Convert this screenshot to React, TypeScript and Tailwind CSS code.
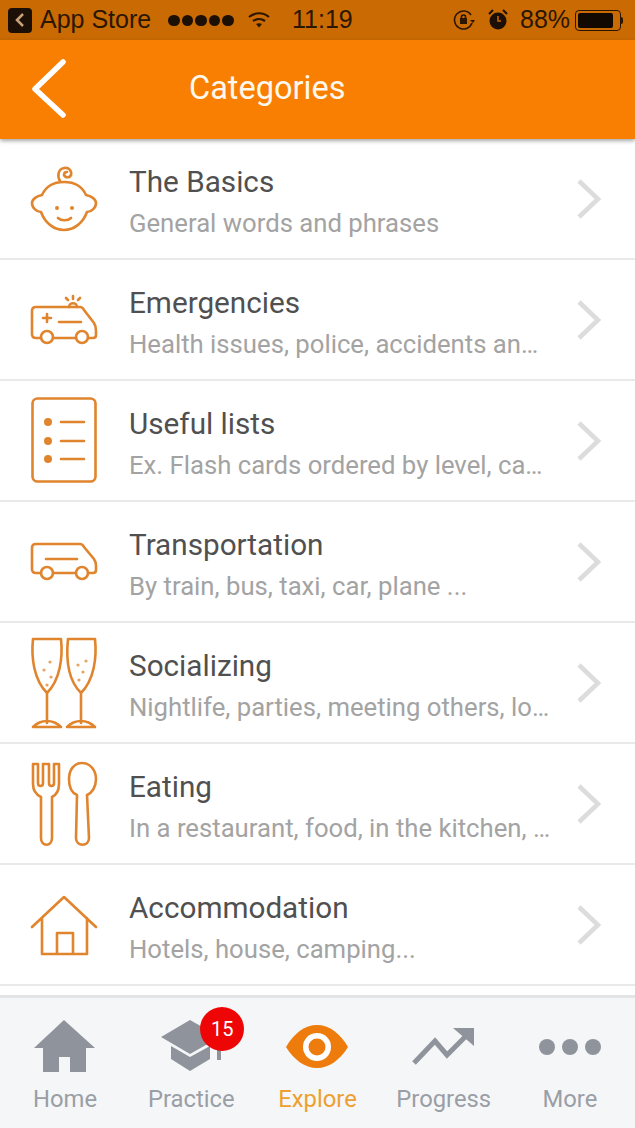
import type { ReactNode } from "react";

const iconStroke = "#e0852e";

function Icon({ y, children }: { y: number; children: ReactNode }) {
  return (
    <svg
      className="shrink-0"
      width={70}
      height={96}
      viewBox={`30 ${y} 70 96`}
      fill="none"
      stroke={iconStroke}
      strokeWidth={2.6}
      strokeLinecap="round"
      strokeLinejoin="round"
    >
      {children}
    </svg>
  );
}

const categories: { title: string; sub: string; icon: ReactNode }[] = [
  {
    title: "The Basics",
    sub: "General words and phrases",
    icon: (
      <Icon y={151}>
        <path d="M42 195C46 186 54 182 64 182C74 182 82 186 86 195C91 196 96 199 96 203C96 208 91 212 87 212C83 223 74 230 64 230C54 230 45 223 41 212C37 212 32 208 32 203C32 199 37 196 42 195Z" />
        <path d="M60 181C57 176 58 169 64 168C69 167 72 171 71 175C70 178 65 178 64 175C64 173 65 172 67 172" />
        <circle cx={57} cy={208} r={2} fill={iconStroke} stroke="none" />
        <circle cx={72} cy={208} r={2} fill={iconStroke} stroke="none" />
        <path d="M58 218C61 221 68 221 71 218" />
      </Icon>
    ),
  },
  {
    title: "Emergencies",
    sub: "Health issues, police, accidents an…",
    icon: (
      <Icon y={272}>
        <path d="M41 338H36C33 338 32 336 32 334V311C32 308 34 307 36 307H80C82 307 83 308 84 310L94 323C96 326 96 328 96 331V335C96 337 95 338 93 338H88M76 338H53" />
        <circle cx={47} cy={337} r={6} />
        <circle cx={82} cy={337} r={6} />
        <path d="M43 318H51M47 314V322M59 322H81" />
        <path d="M69 307C69 302 77 302 77 307M73 296V299M66 298L68 300M80 298L78 300" />
      </Icon>
    ),
  },
  {
    title: "Useful lists",
    sub: "Ex. Flash cards ordered by level, ca…",
    icon: (
      <Icon y={393}>
        <rect x={32.5} y={398.5} width={63} height={83} rx={5} />
        <circle cx={48} cy={422} r={4} fill={iconStroke} stroke="none" />
        <circle cx={48} cy={441} r={4} fill={iconStroke} stroke="none" />
        <circle cx={48} cy={459} r={4} fill={iconStroke} stroke="none" />
        <path d="M61 422H84M61 441H84M61 459H84" />
      </Icon>
    ),
  },
  {
    title: "Transportation",
    sub: "By train, bus, taxi, car, plane ...",
    icon: (
      <Icon y={514}>
        <path d="M41 573H36C33 573 32 571 32 569V548C32 545 34 544 36 544H80C82 544 83 545 84 547L94 559C96 562 96 564 96 566V570C96 572 95 573 93 573H88M76 573H53" />
        <circle cx={47} cy={573} r={6} />
        <circle cx={82} cy={573} r={6} />
        <path d="M46 559H77" />
      </Icon>
    ),
  },
  {
    title: "Socializing",
    sub: "Nightlife, parties, meeting others, lo…",
    icon: (
      <Icon y={635}>
        <path d="M33 639H61C63 658 60 680 47 693C34 680 31 658 33 639ZM47 693V723" />
        <path d="M68 639H95C97 658 94 680 81 693C68 680 66 658 68 639ZM81 693V723" />
        <path d="M33 727C37 723 42 721 47 721C52 721 57 723 61 727ZM67 727C71 723 76 721 81 721C86 721 91 723 95 727Z" />
        <g fill={iconStroke} stroke="none" opacity={0.75}>
          <circle cx={50} cy={662} r={1.6} />
          <circle cx={44} cy={670} r={1.6} />
          <circle cx={51} cy={677} r={1.6} />
          <circle cx={47} cy={685} r={1.6} />
          <circle cx={86} cy={661} r={1.6} />
          <circle cx={78} cy={665} r={1.6} />
          <circle cx={83} cy={672} r={1.6} />
          <circle cx={79} cy={680} r={1.6} />
        </g>
      </Icon>
    ),
  },
  {
    title: "Eating",
    sub: "In a restaurant, food, in the kitchen, …",
    icon: (
      <Icon y={756}>
        <path d="M33 764H38V783C38 787 43 787 43 783V764H49V783C49 787 54 787 54 783V764H59V784C59 791 56 795 52 797V838C52 847 41 847 41 838V797C37 795 33 791 33 784Z" />
        <path d="M82 763C90 763 96 770 96 779C96 787 92 793 87 795L89 838C89 847 76 847 76 838L77 795C72 793 69 787 69 779C69 770 74 763 82 763Z" />
      </Icon>
    ),
  },
  {
    title: "Accommodation",
    sub: "Hotels, house, camping...",
    icon: (
      <Icon y={877}>
        <path d="M32 927L64 897L96 927M42 918V954H87V918M57 954V933H73V954" />
      </Icon>
    ),
  },
];

function HomeIcon() {
  return (
    <svg width={62} height={54} viewBox="35 1021 62 54" fill="#8f949c">
      <path d="M65 1021L96 1049H87V1073H71V1058H60V1073H44V1049H35Z" />
    </svg>
  );
}

function PracticeIcon() {
  return (
    <svg width={62} height={54} viewBox="160 1021 62 54" fill="#8f949c">
      <path d="M161 1038L190 1021L220 1038L190 1055Z" />
      <path d="M171 1047L190 1058L210 1047V1060L190 1072L171 1060Z" />
      <rect x={217} y={1040} width={4} height={21} />
    </svg>
  );
}

function ExploreIcon() {
  return (
    <svg width={62} height={44} viewBox="286 1020 62 44">
      <path d="M286 1042C294 1028 305 1020 317 1020C329 1020 340 1028 348 1042C340 1055 329 1063 317 1063C305 1063 294 1055 286 1042Z" fill="#ee7c0c" />
      <circle cx={317} cy={1042} r={14} fill="#fff" />
      <circle cx={317} cy={1042} r={8.500} fill="#ee7c0c" />
    </svg>
  );
}

function ProgressIcon() {
  return (
    <svg width={64} height={40} viewBox="412 1020 64 40" fill="none">
      <path d="M414 1056L435 1034L447 1048L466 1029" stroke="#8f949c" strokeWidth={5} />
      <path d="M453 1021H474V1039Z" fill="#8f949c" />
    </svg>
  );
}

function MoreIcon() {
  return (
    <div className="flex h-[54px] items-center gap-[7px]">
      <div className="h-4 w-4 rounded-full bg-[#8f949c]" />
      <div className="h-4 w-4 rounded-full bg-[#8f949c]" />
      <div className="h-4 w-4 rounded-full bg-[#8f949c]" />
    </div>
  );
}

const tabs: { label: string; icon: ReactNode; active?: boolean; badge?: string }[] = [
  { label: "Home", icon: <HomeIcon /> },
  { label: "Practice", icon: <PracticeIcon />, badge: "15" },
  { label: "Explore", icon: <ExploreIcon />, active: true },
  { label: "Progress", icon: <ProgressIcon /> },
  { label: "More", icon: <MoreIcon /> },
];

function StatusBar() {
  return (
    <div className="flex h-10 shrink-0 items-center bg-[#c96a02] pl-2 pr-[9px] font-['Liberation_Sans',sans-serif] text-[25px] text-[#2b1602]">
      <div className="flex h-[25px] w-6 items-center justify-center rounded-[4px] bg-[#1c1006]">
        <svg width={12} height={16} viewBox="0 0 12 16" fill="none" stroke="#c9a27a" strokeWidth={2.5}>
          <path d="M9 2L3 8L9 14" />
        </svg>
      </div>
      <span className="ml-2 w-[128px] whitespace-nowrap text-[25px]">App Store</span>
      <div className="flex w-[80px] gap-[2px]">
        {[0, 1, 2, 3, 4].map((i) => (
          <div key={i} className="h-[11px] w-[11.5px] rounded-full bg-[#1c1006]" />
        ))}
      </div>
      <svg width={22} height={16} viewBox="0 0 22 16" fill="none" stroke="#2b1602" strokeWidth={2.2}>
        <path d="M1 5C7 0 15 0 21 5M5 9C8.500 6.500 13.500 6.500 17 9" />
        <path d="M8 12L11 15.500L14 12C12.500 11 9.500 11 8 12Z" fill="#2b1602" stroke="none" />
      </svg>
      <span className="ml-[22px] w-[161px] whitespace-nowrap">11:19</span>
      <svg width={22} height={22} viewBox="0 0 22 22" fill="none" stroke="#2b1602" strokeWidth={1.6}>
        <path d="M19 14A9 9 0 1 1 18 6" />
        <path d="M17 11L20 14L22 11" fill="#2b1602" stroke="none" />
        <rect x={7} y={9} width={7} height={6} fill="#2b1602" stroke="none" />
        <path d="M8.500 9V7.500C8.500 5.500 12.500 5.500 12.500 7.500V9" />
      </svg>
      <svg className="ml-[13px]" width={20} height={22} viewBox="0 0 20 22" fill="#1c1006">
        <circle cx={10} cy={12} r={8.500} />
        <path d="M10 7V12H13" fill="none" stroke="#c96a02" strokeWidth={1.5} />
        <path d="M1 5L5 1M19 5L15 1" stroke="#1c1006" strokeWidth={2} />
      </svg>
      <span className="ml-3 w-[55px] whitespace-nowrap">88%</span>
      <div className="flex items-center">
        <div className="h-[21px] w-[46px] rounded-[4px] border border-[#2b1602] p-[2px]">
          <div className="h-full w-[88%] rounded-[2px] bg-[#120a02]" />
        </div>
        <div className="h-[7px] w-[2px] rounded-r-sm bg-[#2b1602]" />
      </div>
    </div>
  );
}

function Header() {
  return (
    <div className="z-10 flex h-[99px] shrink-0 items-center bg-[#f97f03] pb-[2px] pl-[32px] shadow-[0_2px_4px_rgba(0,0,0,0.35)]">
      <svg width={34} height={60} viewBox="0 0 34 60" fill="none" stroke="#fff" strokeWidth={5.5} strokeLinecap="round" strokeLinejoin="round">
        <path d="M31 3L3 30L31 56" />
      </svg>
      <span className="ml-[123px] text-[32.5px] text-[#fff8ec]">Categories</span>
    </div>
  );
}

function CategoryRow({ title, sub, icon }: { title: string; sub: string; icon: ReactNode }) {
  return (
    <div className="flex h-[121px] shrink-0 items-center border-b-2 border-[#e9e9e9] pl-[30px] pr-[33px]">
      {icon}
      <div className="ml-[29px] min-w-0 flex-1 pt-[6px]">
        <div className="text-[29.700px] leading-[40px] text-[#505050]">{title}</div>
        <div className="mt-[2px] whitespace-nowrap text-[25.700px] leading-[38px] text-[#a3a3a3]">{sub}</div>
      </div>
      <svg className="shrink-0" width={26} height={42} viewBox="0 0 26 42" fill="none" stroke="#dcdcdc" strokeWidth={4.5}>
        <path d="M3 3L22 21L3 39" />
      </svg>
    </div>
  );
}

function TabBar() {
  return (
    <div className="grid h-[133px] shrink-0 grid-cols-5 border-t-[3px] border-[#e3e4e5] bg-[#f5f6f8] px-[2px]">
      {tabs.map((tab) => (
        <div key={tab.label} className="relative flex flex-col items-center pt-[21px]">
          <div className="flex h-[56px] items-center justify-center">{tab.icon}</div>
          {tab.badge && (
            <div className="absolute left-[72px] top-[9px] flex h-[44px] w-[44px] items-center justify-center rounded-full bg-[#ee0606] text-[20px] text-white">
              {tab.badge}
            </div>
          )}
          <span className={`mt-[9px] text-[23.800px] leading-[30px] ${tab.active ? "text-[#eda030]" : "text-[#9a9ea5]"}`}>
            {tab.label}
          </span>
        </div>
      ))}
    </div>
  );
}

export default function App() {
  return (
    <div className="flex h-[1128px] w-[635px] flex-col overflow-hidden bg-white font-['Roboto',sans-serif]">
      <StatusBar />
      <Header />
      <div className="min-h-0 flex-1">
        {categories.map((c) => (
          <CategoryRow key={c.title} title={c.title} sub={c.sub} icon={c.icon} />
        ))}
      </div>
      <TabBar />
    </div>
  );
}
